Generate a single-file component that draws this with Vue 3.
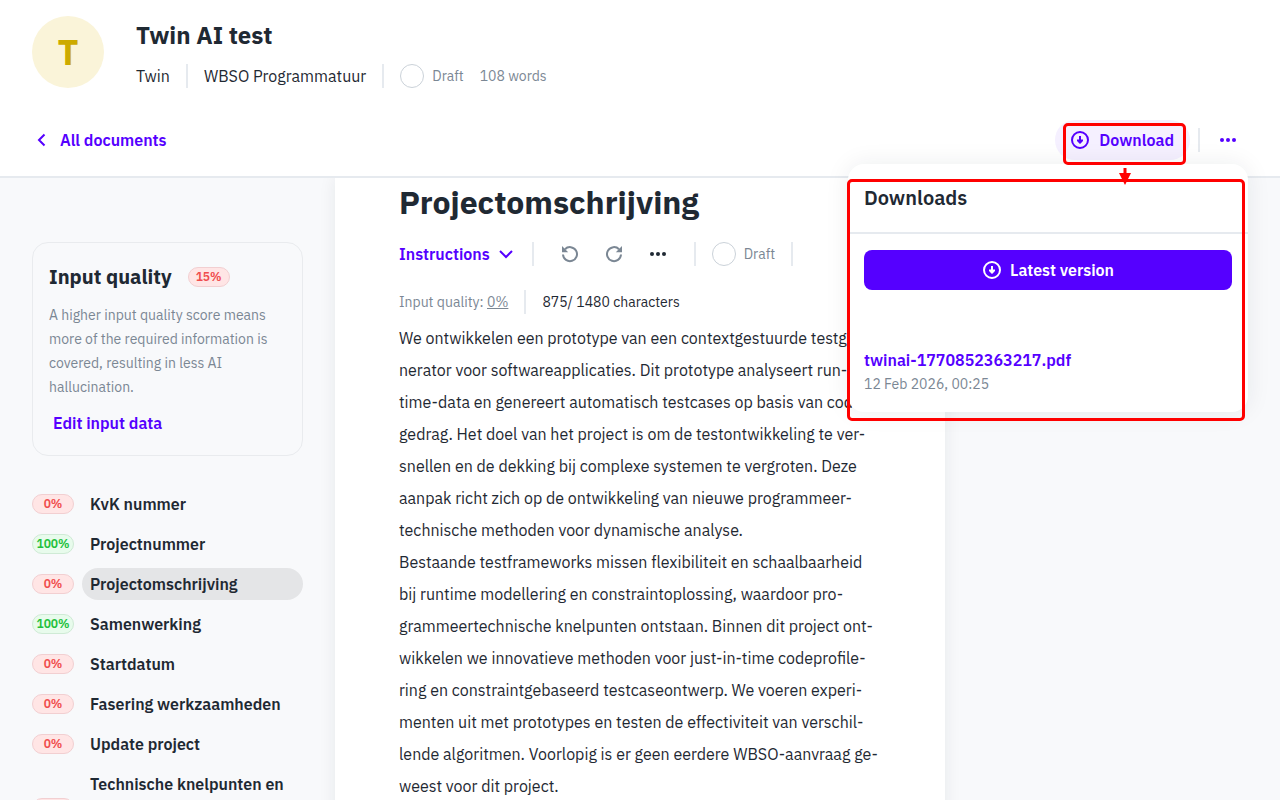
<script setup>
const sections = [
  { score: 0, label: 'KvK nummer' },
  { score: 100, label: 'Projectnummer' },
  { score: 0, label: 'Projectomschrijving', active: true },
  { score: 100, label: 'Samenwerking' },
  { score: 0, label: 'Startdatum' },
  { score: 0, label: 'Fasering werkzaamheden' },
  { score: 0, label: 'Update project' },
  { score: 0, label: 'Technische knelpunten en', tall: true }
]

const body = `We ontwikkelen een prototype van een contextgestuurde testge-
nerator voor softwareapplicaties. Dit prototype analyseert run-
time-data en genereert automatisch testcases op basis van code-
gedrag. Het doel van het project is om de testontwikkeling te ver-
snellen en de dekking bij complexe systemen te vergroten. Deze
aanpak richt zich op de ontwikkeling van nieuwe programmeer-
technische methoden voor dynamische analyse.
Bestaande testframeworks missen flexibiliteit en schaalbaarheid
bij runtime modellering en constraintoplossing, waardoor pro-
grammeertechnische knelpunten ontstaan. Binnen dit project ont-
wikkelen we innovatieve methoden voor just-in-time codeprofile-
ring en constraintgebaseerd testcaseontwerp. We voeren experi-
menten uit met prototypes en testen de effectiviteit van verschil-
lende algoritmen. Voorlopig is er geen eerdere WBSO-aanvraag ge-
weest voor dit project.`
</script>

<template>
  <div class="page">
    <header class="header">
      <div class="summary">
        <div class="avatar">T</div>
        <div>
          <h1>Twin AI test</h1>
          <div class="meta">
            <span>Twin</span>
            <i class="rule"></i>
            <span>WBSO Programmatuur</span>
            <i class="rule"></i>
            <span class="status"><i class="ring"></i>Draft</span>
            <span class="muted">108 words</span>
          </div>
        </div>
      </div>
      <nav class="nav">
        <a class="back" href="#">
          <svg width="20" height="20" viewBox="0 0 20 20"><path d="M12.500 4.500 7 10l5.500 5.500" fill="none" stroke="currentColor" stroke-width="2" /></svg>
          All documents
        </a>
        <div class="actions">
          <div class="download-wrap">
            <button class="download" type="button">
              <svg width="20" height="20" viewBox="0 0 20 20"><circle cx="9" cy="10" r="8" fill="none" stroke="currentColor" stroke-width="2" /><path d="M8 6h2v3.500h2v1.500l-3 3-3-3V9.500h2z" fill="currentColor" /></svg>
              Download
            </button>
            <div class="mark mark-button">
              <svg class="arrow" width="14" height="20" viewBox="0 0 14 20"><path d="M5.500 2h3v5H13L7 19 1 7h4.500z" fill="#f00" /></svg>
            </div>
          </div>
          <i class="rule"></i>
          <button class="icon-button accent" type="button" aria-label="More">
            <svg width="20" height="20" viewBox="0 0 20 20" fill="currentColor"><circle cx="4" cy="10" r="2" /><circle cx="10" cy="10" r="2" /><circle cx="16" cy="10" r="2" /></svg>
          </button>
          <section class="popup">
            <h2>Downloads</h2>
            <div class="popup-body">
              <button class="latest" type="button">
                <svg width="20" height="20" viewBox="0 0 20 20"><circle cx="10" cy="10" r="8" fill="none" stroke="currentColor" stroke-width="2" /><path d="M9 6h2v3.500h2v1.500l-3 3-3-3V9.500h2z" fill="currentColor" /></svg>
                Latest version
              </button>
              <a href="#">twinai-1770852363217.pdf</a>
              <p>12 Feb 2026, 00:25</p>
            </div>
            <div class="mark mark-popup"></div>
          </section>
        </div>
      </nav>
    </header>

    <div class="workspace">
      <aside class="sidebar">
        <section class="card">
          <h2>Input quality <span class="badge low">15%</span></h2>
          <p>A higher input quality score means more of the required information is covered, resulting in less AI hallucination.</p>
          <button type="button">Edit input data</button>
        </section>
        <ul class="sections">
          <li v-for="s in sections" :key="s.label" :class="{ tall: s.tall }">
            <span class="badge" :class="s.score === 100 ? 'high' : 'low'">{{ s.score }}%</span>
            <a href="#" :class="{ active: s.active }">{{ s.label }}</a>
          </li>
        </ul>
      </aside>

      <main class="document">
        <h2>Projectomschrijving</h2>
        <div class="toolbar">
          <button class="instructions" type="button">
            Instructions
            <svg width="20" height="20" viewBox="0 0 20 20"><path d="m4 7 6 6 6-6" fill="none" stroke="currentColor" stroke-width="2" /></svg>
          </button>
          <i class="rule"></i>
          <div class="tools">
            <button class="icon-button muted" type="button" aria-label="Undo">
              <svg width="20" height="20" viewBox="0 0 20 20"><path d="M5 5.200A7 7 0 1 1 3 10.500" fill="none" stroke="currentColor" stroke-width="2" /><path d="M2 2v6.200h6.200z" fill="currentColor" /></svg>
            </button>
            <button class="icon-button muted" type="button" aria-label="Redo">
              <svg width="20" height="20" viewBox="0 0 20 20"><path d="M15 5.200A7 7 0 1 0 17 10.500" fill="none" stroke="currentColor" stroke-width="2" /><path d="M18 2v6.200h-6.200z" fill="currentColor" /></svg>
            </button>
            <button class="icon-button" type="button" aria-label="More options">
              <svg width="20" height="20" viewBox="0 0 20 20" fill="currentColor"><circle cx="4" cy="10" r="2" /><circle cx="10" cy="10" r="2" /><circle cx="16" cy="10" r="2" /></svg>
            </button>
          </div>
          <i class="rule"></i>
          <span class="status"><i class="ring"></i>Draft</span>
          <i class="rule"></i>
        </div>
        <div class="counts">
          <span class="muted">Input quality: <u>0%</u></span>
          <i class="rule"></i>
          <span>875/ 1480 characters</span>
        </div>
        <p class="body">{{ body }}</p>
      </main>
    </div>
  </div>
</template>

<style>
body {
  background: #f8f9fb;
}
</style>

<style scoped>
.page {
  height: 100vh;
  display: flex;
  flex-direction: column;
  overflow: hidden;
  background: #f8f9fb;
  color: #1f2933;
  font: 16px/24px "IBM Plex Sans", "Liberation Sans", sans-serif;
}
.page * {
  box-sizing: border-box;
}
h1, h2, p, ul {
  margin: 0;
  padding: 0;
}
button {
  border: 0;
  padding: 0;
  background: none;
  color: inherit;
  font: inherit;
  cursor: pointer;
}
a {
  color: inherit;
  text-decoration: none;
}
svg {
  display: block;
  flex: none;
}
.muted {
  color: #7b8794;
}
.accent {
  color: #5500ff;
}
.rule {
  flex: none;
  width: 2px;
  height: 24px;
  background: #e6eaef;
}
.header {
  position: relative;
  z-index: 1;
  flex: none;
  padding: 16px 32px;
  border-bottom: 2px solid #e6eaef;
  background: #fff;
}
.summary {
  display: flex;
  gap: 32px;
}
.avatar {
  display: grid;
  place-items: center;
  width: 72px;
  height: 72px;
  border-radius: 50%;
  background: #faf4d9;
  color: #ccaa00;
  font-size: 36px;
  font-weight: 700;
}
h1 {
  font-size: 24px;
  line-height: 38px;
  font-weight: 700;
}
.meta {
  display: flex;
  align-items: center;
  gap: 16px;
  margin-top: 10px;
}
.meta .muted,
.status {
  font-size: 14px;
}
.status {
  display: flex;
  align-items: center;
  gap: 8px;
  color: #7b8794;
}
.ring {
  width: 24px;
  height: 24px;
  border: 1px solid #cbd2d9;
  border-radius: 50%;
  background: #fff;
}
.nav {
  display: flex;
  align-items: center;
  justify-content: space-between;
  height: 40px;
  margin-top: 32px;
}
.back {
  display: flex;
  align-items: center;
  gap: 8px;
  color: #5500ff;
  font-weight: 600;
}
.actions {
  position: relative;
  display: flex;
  align-items: center;
  gap: 8px;
}
.download-wrap {
  position: relative;
}
.download {
  display: flex;
  align-items: center;
  gap: 8px;
  height: 40px;
  padding: 0 16px;
  border-radius: 20px;
  background: #f5f0ff;
  color: #5500ff;
  font-weight: 600;
}
.download svg {
  overflow: visible;
}
.icon-button {
  display: grid;
  place-items: center;
  width: 40px;
  height: 24px;
}
.popup {
  position: absolute;
  top: 44px;
  right: 0;
  width: 400px;
  border-radius: 16px;
  background: #fff;
  box-shadow: 0 0 24px rgba(31, 41, 51, 0.08);
}
.popup h2 {
  padding: 18px 16px;
  border-bottom: 2px solid #e6eaef;
  font-size: 20px;
  line-height: 32px;
  font-weight: 600;
}
.popup-body {
  padding: 16px;
}
.latest {
  display: flex;
  align-items: center;
  justify-content: center;
  gap: 8px;
  width: 100%;
  height: 40px;
  margin-bottom: 58px;
  border-radius: 8px;
  background: #5500ff;
  color: #fff;
  font-weight: 600;
}
.popup a {
  color: #5500ff;
  font-weight: 600;
}
.popup p {
  color: #7b8794;
  font-size: 14px;
}
.mark {
  position: absolute;
  border: 3px solid #f00;
  border-radius: 5px;
  pointer-events: none;
}
.mark-button {
  z-index: 2;
  inset: 3px 4px -5px 8px;
}
.arrow {
  position: absolute;
  top: 40px;
  left: 50%;
  margin-left: -7px;
}
.mark-popup {
  inset: 15px 3px -9px -1px;
}
.workspace {
  flex: 1;
  min-height: 0;
  display: grid;
  grid-template-columns: minmax(240px, 335px) minmax(auto, 610px) minmax(0, 1fr);
}
.sidebar {
  padding: 64px 32px 0;
}
.card {
  padding: 16px;
  border: 1px solid #e9ebee;
  border-radius: 16px;
}
.card h2 {
  display: flex;
  align-items: center;
  gap: 16px;
  font-size: 20px;
  line-height: 36px;
  font-weight: 700;
}
.card p {
  margin: 8px 0;
  color: #7b8794;
  font-size: 14px;
}
.card button {
  display: block;
  height: 32px;
  padding: 0 4px;
  color: #5500ff;
  font-weight: 600;
}
.badge {
  flex: none;
  width: 42px;
  height: 20px;
  border: 1px solid;
  border-radius: 10px;
  font-size: 12px;
  line-height: 18px;
  font-weight: 600;
  text-align: center;
}
.low {
  border-color: #f2cfd1;
  background: #ffe5e5;
  color: #f04d4d;
}
.high {
  border-color: #cfead5;
  background: #e8fbec;
  color: #22c03c;
}
.sections {
  display: grid;
  gap: 8px;
  margin-top: 32px;
  list-style: none;
}
.sections li {
  display: flex;
  align-items: center;
  gap: 8px;
}
.sections a {
  flex: 1;
  padding: 4px 8px;
  border-radius: 16px;
  font-weight: 600;
}
.sections .active {
  background: #e4e5e7;
}
.tall a {
  min-height: 80px;
}
.document {
  padding: 0 64px;
  background: #fff;
  box-shadow: 0 0 16px rgba(31, 41, 51, 0.08);
}
.document h2 {
  font-size: 32px;
  line-height: 48px;
  font-weight: 700;
}
.toolbar {
  display: flex;
  align-items: center;
  gap: 16px;
  margin-top: 16px;
}
.instructions {
  display: flex;
  align-items: center;
  gap: 6px;
  color: #5500ff;
  font-weight: 600;
}
.tools {
  display: flex;
  gap: 4px;
}
.counts {
  display: flex;
  align-items: center;
  gap: 16px;
  margin: 24px 0 8px;
  font-size: 14px;
}
.body {
  line-height: 32px;
  white-space: pre;
}
</style>
